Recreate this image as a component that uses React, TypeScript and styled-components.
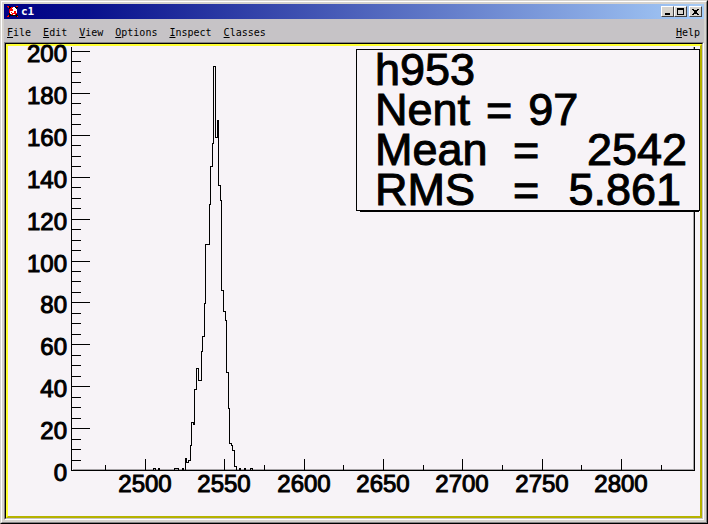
import React from "react";
import styled, { createGlobalStyle } from "styled-components";

const GlobalStyle = createGlobalStyle`
  * { box-sizing: border-box; }
  html, body { margin: 0; background: #000; }
`;

const Window = styled.main`
  display: flex;
  flex-direction: column;
  height: 100vh;
  background: #c6c3c6;
  border: 1px solid;
  border-color: #d6d3ce #000 #000 #d6d3ce;
`;

const Frame = styled.div`
  display: flex;
  flex-direction: column;
  flex: 1;
  min-height: 0;
  border: 1px solid;
  border-color: #fff #848284 #848284 #fff;
`;

const Inner = styled.div`
  display: flex;
  flex-direction: column;
  flex: 1;
  min-height: 0;
  border: 2px solid #d6d3ce;
`;

const TitleBar = styled.header`
  display: flex;
  align-items: center;
  height: 15px;
  flex: none;
  padding: 0 2px 0 3px;
  gap: 2px;
  color: #fff;
  background: linear-gradient(90deg, #000084 0%, #08108c 12%, #a5cbf7 100%);
`;

const Title = styled.h1`
  flex: 1;
  margin: 0;
  font: bold 11px/15px "DejaVu Sans Mono", monospace;
`;

const WindowButtons = styled.div`
  display: flex;
`;

const WindowButton = styled.button<{ $apart?: boolean }>`
  display: flex;
  width: 13px;
  height: 11px;
  margin: 0 0 0 ${(p) => (p.$apart ? 2 : 0)}px;
  padding: 0;
  color: #000;
  background: #d6d3ce;
  border: 1px solid;
  border-color: #fff #424142 #424142 #fff;
`;

const MenuBar = styled.nav`
  display: flex;
  gap: 12px;
  height: 23px;
  flex: none;
  padding: 5px 4px 1px 3px;
`;

const MenuItem = styled.button<{ $end?: boolean }>`
  margin: 0 0 0 ${(p) => (p.$end ? "auto" : "0")};
  padding: 0;
  border: 0;
  color: #000;
  background: none;
  font: 10px/17px "DejaVu Sans Mono", monospace;
  &::first-letter { text-decoration: underline; }
`;

const CanvasEdge = styled.div`
  display: flex;
  flex: 1;
  min-height: 0;
  border: 1px solid;
  border-color: #848284 #fff #fff #848284;
`;

const CanvasWell = styled.div`
  display: flex;
  flex: 1;
  min-height: 0;
  border: 1px solid;
  border-color: #000 #c6c3c6 #c6c3c6 #000;
`;

const Canvas = styled.section`
  position: relative;
  flex: 1;
  min-height: 0;
  background: #f7f3f7;
  border: 2px solid;
  border-color: #ffff31 #b5b200 #b5b200 #ffff31;
`;

const Plot = styled.svg`
  display: block;
  width: 100%;
  height: 100%;
  overflow: visible;
  fill: none;
  stroke: #000;
  shape-rendering: crispEdges;
`;

const AxisLabel = styled.text`
  fill: #000;
  stroke: #000;
  stroke-width: 1px;
  font: 24px "Liberation Sans", sans-serif;
`;

const StatsBox = styled.dl`
  position: absolute;
  top: 3px;
  right: 0;
  width: 344px;
  margin: 0;
  padding: 0 12px 0 18px;
  background: #f7f3f7;
  border: 1px solid #000;
  color: #000;
  font: 45px/40px "Liberation Sans", sans-serif;
  -webkit-text-stroke: 1px #000;
  &::after {
    content: "";
    position: absolute;
    top: 100%;
    left: 3px;
    right: 0;
    height: 2px;
    background: #000;
  }
`;

const StatLine = styled.div`
  display: flex;
  gap: 16px;
`;

const StatRow = styled.div`
  display: grid;
  grid-template-columns: 138px 28px 1fr;
`;

const StatName = styled.dt``;

const StatValue = styled.dd<{ $inset?: boolean }>`
  margin: 0;
  padding-right: ${(p) => (p.$inset ? 6 : 0)}px;
  text-align: right;
`;

const steps: [number, number][] = [
  [185, 458], [186, 462], [188, 460], [190, 445], [191, 422], [193, 424],
  [194, 389], [196, 368], [198, 380], [201, 351], [202, 336], [204, 303],
  [205, 244], [209, 204], [210, 166], [212, 143], [213, 66], [215, 137],
  [217, 120], [218, 185], [220, 200], [221, 290], [223, 311], [225, 320],
  [226, 372], [228, 408], [229, 443], [231, 445], [232, 450], [234, 466],
  [236, 470],
];
const histogram = "M185 470" + steps.map(([x, y]) => `H${x}V${y}`).join("");

const bumps: [number, number][] = [
  [153, 155], [158, 159], [174, 178], [182, 183], [239, 240], [244, 245], [250, 252],
];

const yTicks = Array.from({ length: 41 }, (_, i) => i * 5);
const xTicks = Array.from({ length: 15 }, (_, i) => 2475 + i * 25);
const yPos = (v: number) => Math.round(470 - v * 2.095);
const xPos = (v: number) => Math.round(145 + (v - 2500) * 1.587);

/* Each bin draws its left edge to the new height, then its top up to the next bin. */
const Histogram = () => (
  <Plot viewBox="8 46 692 470" role="img" aria-label="Histogram h953">
    <path d="M72 469H694M693 46V470" stroke="#a5a2a5" transform="translate(.5 .5)" />
    <g transform="translate(.5 .5)">
      <path d="M71 46V470H694V46" />
      {yTicks.map((v) => (
        <path key={v} d={`M71 ${yPos(v)}H${v % 20 ? 80 : 89}`} />
      ))}
      {xTicks.map((v) => (
        <path key={v} d={`M${xPos(v)} 470V${v % 50 ? 464 : 458}`} />
      ))}
      <path d={histogram} />
      {bumps.map(([a, b]) => (
        <path key={a} d={`M${a} 470V468H${b}V470`} />
      ))}
    </g>
    {yTicks.filter((v) => v % 20 === 0).map((v) => (
      <AxisLabel key={v} x={67} y={yPos(v) + 11} textAnchor="end">{v}</AxisLabel>
    ))}
    {xTicks.filter((v) => v % 50 === 0).map((v) => (
      <AxisLabel key={v} x={xPos(v)} y={492} textAnchor="middle">{v}</AxisLabel>
    ))}
  </Plot>
);

const RootIcon = () => (
  <svg width="12" height="13" viewBox="0 0 12 13" aria-hidden="true" shapeRendering="crispEdges">
    <path d="M1 1h2v1h6V1h2v2h-1v7h1v2H9v-1H3v1H1v-2h1V3H1z" fill="#000" />
    <path d="M0 1h2v1H0zM1 2h1v1H1zM9 1h2v1H9zM0 11h2v1H0zM1 10h1v1H1zM10 11h1v1h-1z" fill="#f00" />
    <path d="M4 2h4v1h1v1h1v5H9v1H4V9H3V8H2V4h1V3h1z" fill="#f00" />
    <path d="M6 2h2v1h1v1h1v4H9V6H7v2H5V7H4V6h2V4H5V3h1zM3 6h1v2h1v1H3zM6 9h2v1H6z" fill="#fff" />
  </svg>
);

const menus = ["File", "Edit", "View", "Options", "Inspect", "Classes"];

export default function App() {
  return (
    <Window>
      <GlobalStyle />
      <Frame>
        <Inner>
          <TitleBar>
            <RootIcon />
            <Title>c1</Title>
            <WindowButtons>
              <WindowButton aria-label="Minimize">
                <svg width="11" height="9"><path d="M3 6h5v2H3z" /></svg>
              </WindowButton>
              <WindowButton aria-label="Maximize">
                <svg width="11" height="9"><path fillRule="evenodd" d="M2 1h7v7H2zM3 3v4h5V3z" /></svg>
              </WindowButton>
              <WindowButton aria-label="Close" $apart>
                <svg width="11" height="9" shapeRendering="crispEdges">
                  <path d="M2 2h2v1h3V2h2v1H8v1H7v2h1v1h1v1H7V7H4v1H2V7h1V6h1V4H3V3H2z" />
                </svg>
              </WindowButton>
            </WindowButtons>
          </TitleBar>
          <MenuBar>
            {menus.map((m) => <MenuItem key={m}>{m}</MenuItem>)}
            <MenuItem $end>Help</MenuItem>
          </MenuBar>
          <CanvasEdge>
            <CanvasWell>
              <Canvas>
                <Histogram />
                <StatsBox>
                  <StatName>h953</StatName>
                  <StatLine><StatName>Nent</StatName>=<StatValue>97</StatValue></StatLine>
                  <StatRow><StatName>Mean</StatName>=<StatValue>2542</StatValue></StatRow>
                  <StatRow><StatName>RMS</StatName>=<StatValue $inset>5.861</StatValue></StatRow>
                </StatsBox>
              </Canvas>
            </CanvasWell>
          </CanvasEdge>
        </Inner>
      </Frame>
    </Window>
  );
}
